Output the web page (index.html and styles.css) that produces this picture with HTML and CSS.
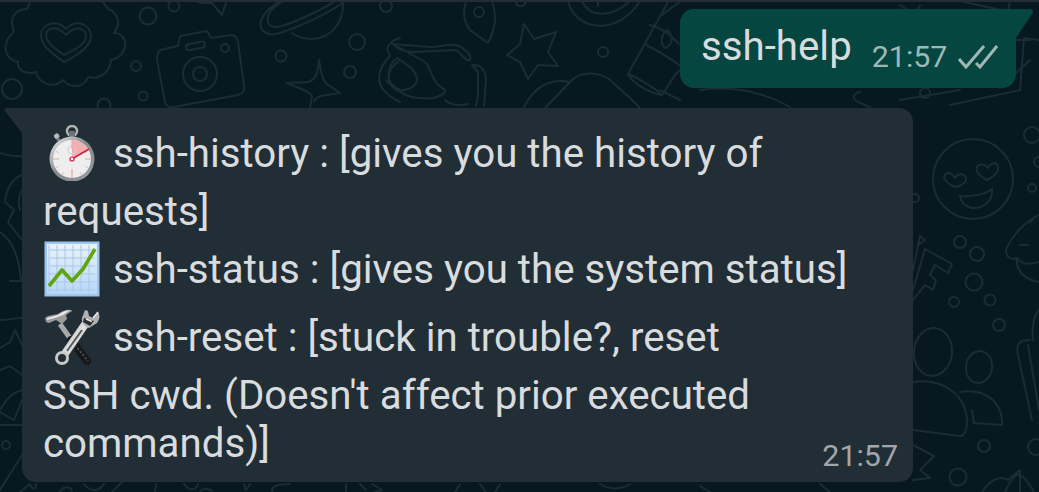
FILE: index.html
```html
<!DOCTYPE html>
<html lang="en">
<head>
<meta charset="utf-8">
<title>SSH help chat</title>
<link rel="stylesheet" href="styles.css">
</head>
<body>
<svg class="wallpaper" viewBox="0 0 1039 492" aria-hidden="true">
  <g class="doodle">
    <!-- heart cloud -->
    <path d="M30 2L27 9C18 9 11 15 12 24C13 29 15 31 13 33C6 38 4 48 7 54C9 59 14 61 18 62C17 70 26 75 36 72C39 84 54 89 63 80C70 89 84 88 88 77C100 80 110 72 111 60C122 58 128 47 124 39C122 35 118 33 114 33C121 24 119 13 108 9L103 2"/>
    <path d="M64 62C50 52 41 45 41 35C41 25 55 18 66 29C77 18 91 25 91 36C91 46 80 54 64 62Z"/>
    <path d="M64 55C54 48 46 42 46 35C46 28 56 24 66 35C76 24 86 29 86 36C86 44 76 49 64 55Z"/>
    <!-- camera -->
    <path d="M160 50L178 46L180 36L207 31L211 38L231 35C236 35 237 38 238 42L244 85C245 91 242 94 238 95L174 107C169 108 166 106 165 102L157 60C157 54 158 52 160 50Z"/>
    <rect x="186" y="43" width="19" height="6" rx="3" transform="rotate(-12 195 46)"/>
    <circle cx="200" cy="74" r="17"/><circle cx="200" cy="74" r="7"/><circle cx="225" cy="48" r="4"/>
    <!-- planet -->
    <path d="M280 0C275 6 263 11 261 21C259 30 266 36 276 34C295 29 330 13 345 1M283 1C272 8 266 14 268 22C270 28 277 28 285 25C300 20 325 8 335 1"/>
    <path d="M343 2C344 22 332 38 312 39C302 39 296 36 292 33"/>
    <circle cx="148" cy="16" r="8.5"/><circle cx="174" cy="6" r="5.5"/><circle cx="136" cy="66" r="5"/><circle cx="143" cy="96" r="4.5"/><circle cx="12" cy="89" r="10"/><circle cx="104" cy="105" r="6.5"/>
    <path d="M195 0C198 4 205 3 212 3L222 15L226 3"/>
    <!-- four point star -->
    <path d="M319 60C318 72 316 80 308 82L287 83C298 88 308 90 312 96L310 108M319 60C321 72 322 82 330 86L340 93C330 95 318 94 314 101"/>
    <circle cx="357" cy="42" r="8"/><circle cx="281" cy="56" r="5.5"/><circle cx="350" cy="72" r="6"/><circle cx="386" cy="6" r="6"/>
    <!-- bottle -->
    <path d="M400 38C392 40 386 46 388 51L390 56C380 66 376 78 382 88C386 94 394 99 400 102M400 60C392 66 386 74 390 82C392 86 396 88 400 90"/>
    <!-- glasses -->
    <path d="M392 44L430 47C438 47 448 44 456 45C463 47 472 54 470 60C466 62 462 54 456 50L414 52C406 52 398 50 393 44ZM393 44L425 62C432 68 430 80 442 88C452 92 435 100 425 98C410 100 394 90 386 80M397 58C386 66 386 84 396 90C404 92 416 88 417 80C417 72 410 66 397 58Z"/>
    <path d="M472 65C482 64 486 72 486 80L484 106M472 65L478 72L478 96L476 106M445 100C450 105 460 106 468 104"/>
    <!-- pin -->
    <path d="M466 2C462 14 464 22 470 30L488 43C495 30 497 15 492 2"/><circle cx="479" cy="12" r="5"/>
    <path d="M516 2C516 7 524 8 526 2"/>
    <!-- star -->
    <path d="M524 24L534 39L556 32L548 52L558 66L538 65L528 79L520 62L507 55L520 44Z"/>
    <!-- big disc -->
    <path d="M568 1C576 32 618 36 640 1M582 1C590 18 612 18 630 1M598 1L598 6"/>
    <circle cx="603" cy="52" r="5"/>
    <!-- lipstick -->
    <path d="M668 2L628 74M680 2L660 16M650 25C662 28 672 36 679 44M646 45C656 50 670 58 679 65M628 74C634 86 654 94 662 95C668 88 672 76 680 70M628 74C638 78 655 88 662 95"/>
    <path d="M668 30C660 34 660 46 666 48C672 44 674 38 668 30Z"/>
    <!-- envelope -->
    <path d="M524 107C535 85 552 78 570 82C580 70 600 72 610 80L630 98L640 108M570 82L545 108"/>
    <!-- top right bits -->
    <path d="M700 90C730 86 760 90 790 107M660 90L680 100M870 107C850 100 850 95 860 92M900 100L960 90"/>
    <circle cx="925" cy="93" r="5"/>
    <path d="M1000 88L1030 60M1039 40L1024 38L1020 90L950 105"/>
    <path d="M1010 2L1000 40L1030 40"/>
    <path d="M960 1L1010 12M900 5L915 15L920 5"/>
    <!-- face -->
    <circle cx="973" cy="179" r="40"/>
    <path d="M955 187C948 184 942 179 945 175C948 171 952 173 955 178C957 173 964 173 966 178C967 182 962 186 955 187Z"/>
    <path d="M987 180C980 177 975 171 977 167C979 163 985 164 988 168C990 163 997 161 998 167C999 172 995 176 987 180Z"/>
    <path d="M960 196C970 197 985 195 992 189C993 200 985 208 974 208C967 208 961 203 960 196Z"/>
    <!-- dots -->
    <circle cx="960" cy="242" r="6"/><circle cx="977" cy="254" r="7"/><circle cx="974" cy="282" r="8.5"/><circle cx="954" cy="302" r="5"/><circle cx="990" cy="300" r="5.5"/><circle cx="999" cy="325" r="6"/><circle cx="1032" cy="188" r="4"/><circle cx="915" cy="198" r="4"/>
    <circle cx="1032" cy="135" r="8"/><circle cx="1039" cy="162" r="5"/>
    <!-- key -->
    <path d="M913 270L920 236L925 240L918 245M913 300L925 285L933 290L936 280L930 275L935 265L948 273L952 264L925 249L913 290"/>
    <!-- muffin -->
    <path d="M1039 215C1025 222 1012 235 1006 250C1006 258 1012 260 1017 258C1022 265 1030 265 1039 262M1017 258C1015 270 1025 280 1039 282"/>
    <path d="M1030 223L1034 218M1020 245L1028 245"/>
    <!-- people -->
    <ellipse cx="933" cy="352" rx="19" ry="24" transform="rotate(6 933 352)"/>
    <ellipse cx="979" cy="367" rx="13" ry="16" transform="rotate(8 979 367)"/>
    <path d="M913 382C940 378 965 392 967 420C967 428 966 436 960 436L913 430"/>
    <path d="M960 392C985 388 1003 402 1002 425L974 423L972 410"/>
    <!-- sticks -->
    <path d="M1030 340C1018 340 1016 345 1018 355L1032 420M1039 310C1032 318 1032 335 1033 340M1028 345L1039 410"/>
    <circle cx="984" cy="446" r="6"/><circle cx="958" cy="477" r="8.5"/><circle cx="1036" cy="447" r="8"/>
    <path d="M913 445L934 456L920 470L930 478L913 480"/>
    <path d="M982 492C990 480 1000 475 1008 480L1020 470L1020 492"/>
    <path d="M1005 492C1015 470 1020 468 1034 492"/>
    <!-- left strip -->
    <path d="M0 153C8 156 15 157 22 156M0 320C8 320 15 318 22 318M0 232C10 240 18 250 21 280M10 281L22 281"/>
    <path d="M22 175C12 178 6 190 5 202L14 210L8 222L22 240M22 190C18 196 18 205 20 210"/>
    <path d="M0 348L10 342L15 330L22 345M0 370L10 366L22 375M0 410C8 396 14 392 22 390M0 412L14 420L22 400"/>
    <path d="M0 425L22 425M0 490L22 455"/><circle cx="6" cy="445" r="4"/>
    <!-- bottom strip -->
    <path d="M20 492L30 484M30 484C32 490 36 490 36 484M60 492C62 486 72 486 72 492M84 484C92 494 100 490 104 484M112 492L122 482M156 484L155 492M184 484C190 492 196 490 198 484M200 492C204 486 212 490 212 492M244 484L246 490L250 484M272 492C272 486 276 484 290 484M346 484L346 492M360 484L366 490M372 484L382 490L375 492"/>
    <path d="M460 484L455 492M480 484L486 492M500 484L495 492M600 484C610 490 620 490 630 484M700 486L710 492M820 484L830 492"/>
  </g>
</svg>

<div class="topbar"></div>
<main class="chat">
  <div class="bubble bubble--out">
    <span class="out-text">ssh-help</span>
    <span class="meta meta--out">21:57</span>
    <svg class="ticks" viewBox="0 0 40 24" aria-hidden="true">
      <path d="M1 14L8 22L26 1M18 18L22 22L39 1"/>
    </svg>
  </div>

  <div class="bubble bubble--in">
    <div class="line">
      <svg class="emoji" viewBox="0 0 56 56" aria-hidden="true">
        <defs>
          <linearGradient id="rim" x1="0" y1="0" x2="1" y2="1"><stop offset="0" stop-color="#f2f2f2"/><stop offset=".45" stop-color="#8a8d8f"/><stop offset=".8" stop-color="#8f9294"/><stop offset="1" stop-color="#dedede"/></linearGradient>
          <linearGradient id="chartbg" x1="0" y1="0" x2="0" y2="1"><stop offset="0" stop-color="#e8f2fc"/><stop offset="1" stop-color="#b9d7f6"/></linearGradient>
          <linearGradient id="steel" x1="0" y1="0" x2="1" y2="1"><stop offset="0" stop-color="#8a8a8a"/><stop offset=".5" stop-color="#e4e4e4"/><stop offset="1" stop-color="#9a9a9a"/></linearGradient>
        </defs>
        <g transform="translate(3 0)">
          <circle cx="25" cy="6" r="5" fill="none" stroke="#b3b5b7" stroke-width="2.4"/>
          <rect x="22" y="6" width="6" height="6" rx="1" fill="#6f7375"/>
          <rect x="7" y="9" width="5" height="5" rx="1.5" fill="#b9babb" transform="rotate(-35 9 11)"/>
          <rect x="10" y="13" width="3" height="5" fill="#808385" transform="rotate(-35 11 15)"/>
          <circle cx="25" cy="34" r="22.5" fill="url(#rim)"/>
          <circle cx="25" cy="34" r="19" fill="#eeeeee"/>
          <path d="M25 34V15A19 19 0 0 1 41.5 24.5Z" fill="#f1b0ad"/>
          <circle cx="25" cy="25" r="4" fill="none" stroke="#d0d0d0"/>
          <path d="M25 15v9M25 44v9M6 34h6M38 34h6" stroke="#f0a5a3" stroke-width="1.2"/>
          <path d="M35 18l-2 3M41 26l-3 2M41 43l-3-2M35 50l-2-3M15 50l2-3M9 43l3-2M9 26l3 2" stroke="#c9c9c9"/>
          <path d="M25 34L42 24" stroke="#d5203a" stroke-width="1.6"/>
          <circle cx="25" cy="34" r="2" fill="#fff" stroke="#d5203a" stroke-width="1.2"/>
        </g>
      </svg>
      <span>ssh-history : [gives you the history of</span>
    </div>
    <div class="line line--gap-s">requests]</div>
    <div class="line line--gap-s">
      <svg class="emoji" viewBox="0 0 56 56" aria-hidden="true">
        <rect x=".5" y=".5" width="55" height="55" fill="#9cc4f0"/>
        <rect x="3" y="3" width="50" height="50" fill="url(#chartbg)"/>
        <path d="M5 4v48M13 4v48M21 4v48M29 4v48M37 4v48M45 4v48M5 9h46M5 17h46M5 25h46M5 33h46M5 41h46M5 49h46" stroke="#a9c7e8" stroke-width="1"/>
        <path d="M5 45L18 29L28 40L39 28L51 8" fill="none" stroke="#5fa50e" stroke-width="3.6" stroke-linejoin="round"/>
      </svg>
      <span>ssh-status : [gives you the system status]</span>
    </div>
    <div class="line line--gap-l">
      <svg class="emoji" viewBox="0 0 56 56" aria-hidden="true">
        <!-- hammer handle -->
        <path d="M16 15L28 32" stroke="#a9a9a9" stroke-width="5"/>
        <path d="M27 31L43 52" stroke="#17191b" stroke-width="8" stroke-linecap="round"/>
        <path d="M31 36L44 52" stroke="#55585a" stroke-width="1.6" stroke-dasharray="2 2"/>
        <!-- hammer head -->
        <path d="M1 9L4 7L14 5C18 2 23 0 27 1C30 2 26 3 22 6L23 10L18 15L12 11L5 14L2 13Z" fill="#9a9a9a"/>
        <path d="M3 9L14 6C18 3 22 1 26 1.500L19 6C14 8 8 10 3 11Z" fill="#e9e9e9"/>
        <!-- wrench -->
        <path d="M42 14L20 46" stroke="#2a2d2f" stroke-width="10" stroke-linecap="round"/>
        <path d="M42 14L20 46" stroke="url(#steel)" stroke-width="8" stroke-linecap="round"/>
        <path d="M38 21L23 42" stroke="#55585a" stroke-width="2"/>
        <circle cx="18" cy="49" r="5.500" fill="#222e35" stroke="#c9c9c9" stroke-width="3"/>
        <path d="M41 1L38 9C37 14 41 18 45 19L53 14C56 10 56 6 54 3L49 9L45 7L44 2Z" fill="#b0b0b0"/>
        <path d="M40 9L50 12L46 17L39 13Z" fill="#2a2d2f"/>
        <path d="M42 10L48 12.500" stroke="#e6e6e6" stroke-width="1.400"/>
        <path d="M49 9L54 3" stroke="#eee" stroke-width="1.400"/>
      </svg>
      <span>ssh-reset : [stuck in trouble?, reset</span>
    </div>
    <div class="line line--gap-s">SSH cwd. (Doesn't affect prior executed</div>
    <div class="line line--last">
      <span>commands)]</span>
      <span class="meta meta--in">21:57</span>
    </div>
  </div>
</main>
</body>
</html>
```

FILE: styles.css
```css
* {
  box-sizing: border-box;
}

html,
body {
  margin: 0;
  height: 100%;
}

body {
  position: relative;
  width: 1039px;
  height: 492px;
  overflow: hidden;
  background: #071820;
  color: #d9dcde;
  font-family: Roboto, "Liberation Sans", sans-serif;
  font-size: 40.25px;
}

.wallpaper {
  position: absolute;
  inset: 0;
  width: 1039px;
  height: 492px;
}

.doodle {
  fill: none;
  stroke: #1b2c34;
  stroke-width: 2;
  stroke-linecap: round;
  stroke-linejoin: round;
}

.topbar {
  position: relative;
  height: 2px;
  background: #232d36;
}

.chat {
  position: relative;
  display: flex;
  flex-direction: column;
  padding: 7px 23px 0 22px;
}

.bubble {
  position: relative;
  background: #222e35;
}

.bubble--out {
  align-self: flex-end;
  display: flex;
  align-items: center;
  width: 336px;
  height: 79px;
  padding-left: 21px;
  padding-bottom: 4px;
  background: #054640;
  border-radius: 14px 0 14px 14px;
}

.bubble--out::after {
  content: "";
  position: absolute;
  top: 0;
  left: 100%;
  width: 18px;
  height: 30px;
  background: #054640;
  clip-path: path("M0 0H14C17 0 18 3 16 5L0 29Z");
}

.out-text {
  line-height: 48px;
}

.meta {
  font-size: 30.4px;
  line-height: 24px;
}

.meta--out {
  margin-left: 20px;
  margin-top: 20px;
  color: #9fb8b5;
}

.ticks {
  width: 40px;
  height: 24px;
  margin-left: 11px;
  margin-top: 20px;
  fill: none;
  stroke: #9fb8b5;
  stroke-width: 3;
}

.bubble--in {
  width: 891px;
  height: 374px;
  margin-top: 20px;
  padding: 22px 15px 14px 21px;
  border-radius: 0 14px 14px 14px;
}

.bubble--in::before {
  content: "";
  position: absolute;
  top: 0;
  right: 100%;
  width: 18px;
  height: 26px;
  background: #222e35;
  clip-path: path("M18 0H2C0 0 0 2 1 3L18 25Z");
}

.line {
  display: flex;
  align-items: center;
  height: 48px;
  line-height: 48px;
  white-space: nowrap;
}

.line--gap-s {
  margin-top: 10px;
}

.line--gap-l {
  margin-top: 20px;
}

.line--last {
  justify-content: space-between;
  align-items: flex-end;
}

.emoji {
  flex: none;
  width: 56px;
  height: 56px;
  margin: -5px 13px -3px 1px;
}

.meta--in {
  color: #a2a7ab;
}
```
